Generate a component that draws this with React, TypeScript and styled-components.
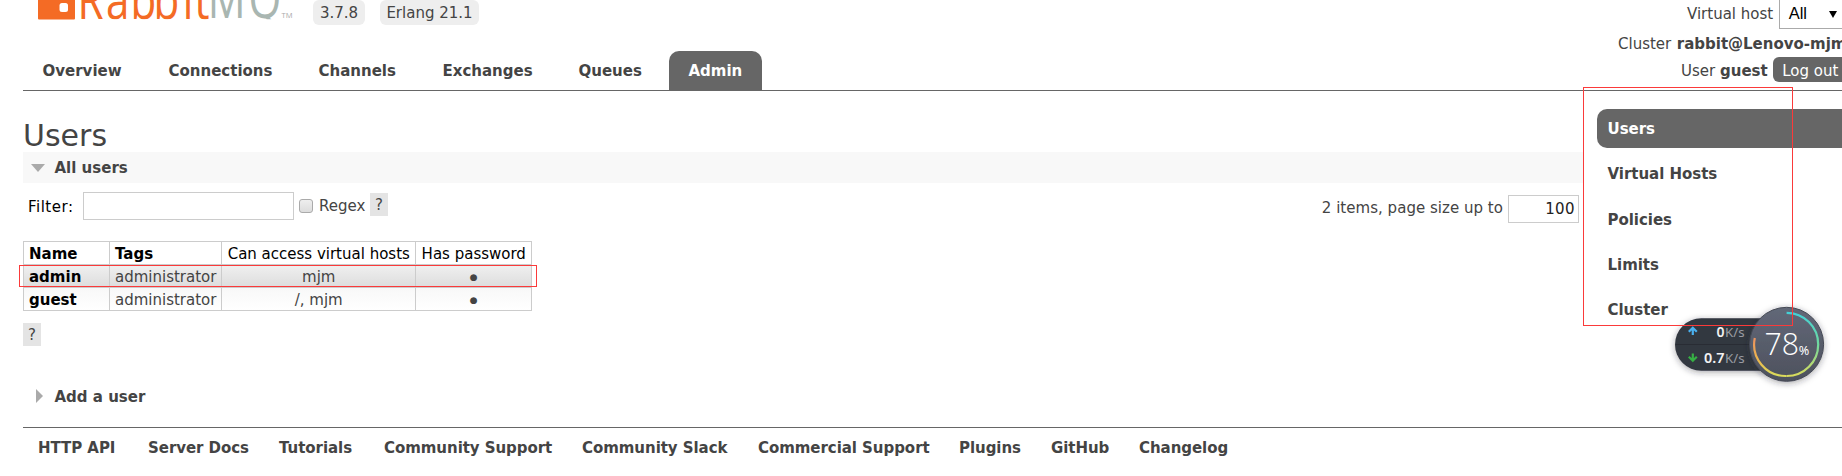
import React from "react";
import styled, { createGlobalStyle } from "styled-components";

const Global = createGlobalStyle`
  *, *::before, *::after { box-sizing: border-box; }
  body { margin: 0; background: #fff; color: #444; font: 15px/18px Verdana, "DejaVu Sans", sans-serif; }
  #root { overflow: hidden; }
`;

const Page = styled.div`
  position: relative;
  height: 476px;
  overflow: hidden;
  padding-left: 23px;
`;

const Header = styled.header`
  display: flex;
  justify-content: space-between;
  height: 91px;
  border-bottom: 1px solid #666;
`;

const HeaderLeft = styled.div`
  display: flex;
  flex-direction: column;
  justify-content: space-between;
`;

const Brand = styled.div`
  display: flex;
  height: 25px;
`;

const Logo = styled.svg`
  width: 290px;
  height: 25px;
`;

const Version = styled.span<{ $w: number }>`
  width: ${(p) => p.$w}px;
  height: 25px;
  margin-right: 15px;
  padding-top: 4px;
  text-align: center;
  white-space: nowrap;
  background: #eee;
  border-radius: 6px;
`;

const Tabs = styled.nav`
  display: flex;
`;

const Tab = styled.a<{ $w: number; $active?: boolean }>`
  width: ${(p) => p.$w}px;
  height: 39px;
  padding: 11px 0 0 19.5px;
  font-weight: bold;
  color: ${(p) => (p.$active ? "#fff" : "#444")};
  background: ${(p) => (p.$active ? "#666" : "transparent")};
  border-radius: 10px 10px 0 0;
`;

const Session = styled.div`
  width: 232px;
  display: flex;
  flex-direction: column;
  flex-shrink: 0;
`;

const SessionLine = styled.div<{ $pad: number; $h: number }>`
  display: flex;
  height: ${(p) => p.$h}px;
  padding-left: ${(p) => p.$pad}px;
  white-space: nowrap;
  gap: 5.5px;
`;

const SessionLabel = styled.span`
  padding-top: 5px;
`;

const VhostSelect = styled.div`
  display: flex;
  justify-content: space-between;
  flex-shrink: 0;
  width: 76px;
  height: 29px;
  padding: 4px 17px 0 9px;
  color: #000;
  font: 16.5px/18px "Liberation Sans", sans-serif;
  border: 1px solid #aaa;
  border-top: 0;
`;

const Arrow = styled.svg`
  width: 8px;
  height: 7px;
  margin-top: 7px;
`;

const Logout = styled.span`
  width: 80px;
  height: 25px;
  padding: 5px 9px;
  color: #fff;
  background: #666;
  border-radius: 6px;
`;

const Content = styled.div`
  display: flex;
  height: 336px;
`;

const Main = styled.main`
  width: 1560px;
  padding-top: 26px;
`;

const Title = styled.h1`
  height: 35px;
  margin: 0;
  font-size: 30px;
  line-height: 37px;
  font-weight: normal;
`;

const SectionBar = styled.h2<{ $open?: boolean }>`
  display: flex;
  align-items: center;
  height: 31px;
  margin: 0;
  padding-left: 8px;
  font-size: 15px;
  background: ${(p) => (p.$open ? "#f8f8f8" : "transparent")};
`;

const Toggle = styled.svg`
  width: 14px;
  height: 16px;
  margin-right: 9.5px;
`;

const FilterRow = styled.div`
  display: flex;
  align-items: flex-start;
  height: 58px;
  padding: 9px 4px 0 5px;
`;

const FilterLabel = styled.label`
  width: 55px;
  padding-top: 6px;
  letter-spacing: 0.5px;
  color: #000;
`;

const FilterInput = styled.input`
  width: 211px;
  height: 28px;
  border: 1px solid #ccc;
`;

const Checkbox = styled.span`
  width: 14px;
  height: 14px;
  margin: 7px 6px 0 5px;
  border: 1px solid #aaa;
  border-radius: 3px;
  background: linear-gradient(#eee, #dcdcdc);
`;

const RegexLabel = styled.label`
  width: 51px;
  padding-top: 5px;
`;

const Help = styled.span<{ $drop?: number }>`
  display: block;
  width: 18px;
  height: 23px;
  margin-top: ${(p) => p.$drop ?? 0}px;
  text-align: center;
  line-height: 24px;
  background: #e4e4e4;
`;

const PageSize = styled.div`
  display: flex;
  margin-left: auto;
  padding-top: 3px;
  gap: 5px;
  line-height: 26px;
  letter-spacing: 0.03px;
`;

const PageSizeInput = styled.input`
  width: 71px;
  height: 28px;
  padding: 0 3px;
  text-align: right;
  font: inherit;
  letter-spacing: 0.4px;
  color: #222;
  border: 1px solid #ccc;
`;

const UsersTable = styled.table`
  width: 508px;
  margin-bottom: 12px;
  table-layout: fixed;
  border-collapse: collapse;
`;

const Row = styled.tr<{ $bg: string }>`
  height: 23px;
  background: ${(p) => p.$bg};
`;

const Cell = styled.td<{ $bold?: boolean; $center?: boolean; $dark?: boolean }>`
  padding: 2px 4.5px 0 5px;
  border: 1px solid #ccc;
  white-space: nowrap;
  line-height: 20px;
  text-align: ${(p) => (p.$center ? "center" : "left")};
  font-weight: ${(p) => (p.$bold ? "bold" : "normal")};
  color: ${(p) => (p.$dark ? "#000" : "#444")};
`;

const Dot = styled.span`
  font-size: 9px;
  vertical-align: 2px;
  line-height: 1;
`;

const AddUser = styled.div`
  padding-top: 35px;
`;

const SideNav = styled.nav`
  display: flex;
  flex-direction: column;
  gap: 6.3px;
  flex: 1;
  padding: 18px 0 0 14px;
`;

const SideLink = styled.a<{ $active?: boolean }>`
  height: 39px;
  padding: 11px 10.5px;
  font-weight: bold;
  letter-spacing: -0.03px;
  color: ${(p) => (p.$active ? "#fff" : "#444")};
  background: ${(p) => (p.$active ? "#666" : "transparent")};
  border-radius: 10px 0 0 10px;
`;

const Footer = styled.footer`
  display: flex;
  padding: 11px 0 0 15px;
  border-top: 1px solid #666;
`;

const FooterLink = styled.a<{ $w: number }>`
  width: ${(p) => p.$w}px;
  font-weight: bold;
  letter-spacing: -0.05px;
  white-space: nowrap;
`;

const Highlight = styled.div<{ $x: number; $y: number; $w: number; $h: number }>`
  position: absolute;
  left: ${(p) => p.$x}px;
  top: ${(p) => p.$y}px;
  width: ${(p) => p.$w}px;
  height: ${(p) => p.$h}px;
  border: 1px solid #fb3a3a;
`;

const Monitor = styled.svg`
  position: absolute;
  left: 1660px;
  top: 295px;
  width: 182px;
  height: 95px;
`;

const tabs: [string, number][] = [["Overview", 126], ["Connections", 150], ["Channels", 124], ["Exchanges", 136], ["Queues", 110], ["Admin", 93]];
const sections = ["Users", "Virtual Hosts", "Policies", "Limits", "Cluster"];
const links: [string, number][] = [["HTTP API", 110], ["Server Docs", 131], ["Tutorials", 105], ["Community Support", 198], ["Community Slack", 176], ["Commercial Support", 201], ["Plugins", 92], ["GitHub", 88], ["Changelog", 100]];
const users = [
  { name: "admin", tags: "administrator", hosts: "mjm", bg: "linear-gradient(#f0f0f0, #dcdcdc)" },
  { name: "guest", tags: "administrator", hosts: "/, mjm", bg: "linear-gradient(#f8f8f8, #fff)" },
];

function SpeedMonitor() {
  return (
    <Monitor viewBox="0 0 182 95">
      <defs>
        <filter id="shadow" x="-20%" y="-20%" width="140%" height="150%">
          <feDropShadow dx="0" dy="1.5" stdDeviation="3" floodColor="#223" floodOpacity="0.4" />
        </filter>
        <linearGradient id="disc" x1="0" y1="0" x2="0" y2="1">
          <stop offset="0" stopColor="#626878" /><stop offset="1" stopColor="#4d515d" />
        </linearGradient>
        <linearGradient id="rightArc" x1="0" y1="17" x2="0" y2="81" gradientUnits="userSpaceOnUse">
          <stop offset="0" stopColor="#42d0d8" /><stop offset="0.5" stopColor="#6fd9a0" /><stop offset="1" stopColor="#d9dc5c" />
        </linearGradient>
        <linearGradient id="leftArc" x1="0" y1="42" x2="0" y2="81" gradientUnits="userSpaceOnUse">
          <stop offset="0" stopColor="#ee9060" /><stop offset="0.6" stopColor="#ebb84d" /><stop offset="1" stopColor="#d9dc5c" />
        </linearGradient>
      </defs>
      <rect x="15" y="23.3" width="112" height="52.4" rx="26.2" fill="#333741" filter="url(#shadow)" />
      <path d="M16 49.5H92" stroke="#292c34" />
      <circle cx="126.6" cy="49.3" r="37" fill="url(#disc)" stroke="#454955" filter="url(#shadow)" />
      <path d="M126.6 17.8A31.6 31.6 0 0 1 126.6 81" fill="none" stroke="url(#rightArc)" strokeWidth="2.2" />
      <path d="M126.6 81A31.6 31.6 0 0 1 94.8 43" fill="none" stroke="url(#leftArc)" strokeWidth="2.2" />
      <path d="M32.8 40V33M28.8 36.7L32.8 32.7L36.8 36.7" fill="none" stroke="#4ab1f0" strokeWidth="2.2" />
      <path d="M32.8 58.5V65.5M28.8 61.8L32.8 65.8L36.8 61.8" fill="none" stroke="#36b044" strokeWidth="2.2" />
      <g fontFamily="Noto Sans" fontSize="14" fontWeight="600" fill="#f2f2f2">
        <text x="56.5" y="42" textLength="8" lengthAdjust="spacingAndGlyphs">0</text>
        <text x="44" y="68.3" textLength="20.5" lengthAdjust="spacingAndGlyphs">0.7</text>
      </g>
      <g fontFamily="Noto Sans" fontSize="12" fill="#9a9ca3">
        <text x="65" y="42" textLength="19.5" lengthAdjust="spacingAndGlyphs">K/s</text>
        <text x="65" y="68.3" textLength="19.5" lengthAdjust="spacingAndGlyphs">K/s</text>
      </g>
      <text x="104.5" y="60" fontFamily="Open Sans" fontWeight="300" fontSize="32" fill="#fff" textLength="34.5" lengthAdjust="spacingAndGlyphs">78</text>
      <text x="138.8" y="60" fontFamily="Noto Sans" fontSize="13" fill="#fff" textLength="10.5" lengthAdjust="spacingAndGlyphs">%</text>
    </Monitor>
  );
}

export default function App() {
  return (
    <Page>
      <Global />
      <Header>
        <HeaderLeft>
          <Brand>
            <Logo viewBox="23 0 290 25">
              <defs><clipPath id="baseline"><rect x="23" y="0" width="400" height="19.3" /></clipPath></defs>
              <path d="M38 0H75V18.5Q75 19.5 74 19.5H39Q38 19.5 38 18.5Z" fill="#f46b25" />
              <rect x="59.5" y="3" width="8.5" height="9" rx="2.5" fill="#fff" />
              <g fontFamily="Open Sans" fontSize="54" transform="scale(0.78 1)" clipPath="url(#baseline)">
                <text x="99.5 136 167.2 196.7 234.3 249.5" y="18.7" fill="#f46b25">Rabbit</text>
                <text x="266.5 318.5" y="18.2" fill="#a9b6b1">MQ</text>
              </g>
              <text x="281.5" y="18" fill="#aaa" fontFamily="Open Sans" fontSize="8" textLength="11" lengthAdjust="spacingAndGlyphs">TM</text>
            </Logo>
            <Version $w={52}>3.7.8</Version>
            <Version $w={99}>Erlang 21.1</Version>
          </Brand>
          <Tabs>
            {tabs.map(([label, w]) => <Tab key={label} $w={w} $active={label === "Admin"}>{label}</Tab>)}
          </Tabs>
        </HeaderLeft>
        <Session>
          <SessionLine $pad={77} $h={35}>
            <SessionLabel>Virtual host</SessionLabel>
            <VhostSelect>All<Arrow viewBox="0 0 8 7"><path d="M0 0H8L4 7Z" /></Arrow></VhostSelect>
          </SessionLine>
          <SessionLine $pad={8} $h={22}>Cluster <b>rabbit@Lenovo-mjm</b></SessionLine>
          <SessionLine $pad={71} $h={25}>
            <SessionLabel>User <b>guest</b></SessionLabel>
            <Logout>Log out</Logout>
          </SessionLine>
        </Session>
      </Header>
      <Content>
        <Main>
          <Title>Users</Title>
          <SectionBar $open>
            <Toggle viewBox="0 0 14 16"><path d="M0 4H14L7 12Z" fill="#aaa" /></Toggle>
            All users
          </SectionBar>
          <FilterRow>
            <FilterLabel>Filter:</FilterLabel>
            <FilterInput />
            <Checkbox />
            <RegexLabel>Regex</RegexLabel>
            <Help $drop={1}>?</Help>
            <PageSize>2 items, page size up to<PageSizeInput defaultValue="100" /></PageSize>
          </FilterRow>
          <UsersTable>
            <colgroup><col width="86" /><col width="112" /><col width="194" /><col width="116" /></colgroup>
            <tbody>
              <Row $bg="#fff">
                <Cell $bold $dark>Name</Cell><Cell $bold $dark>Tags</Cell><Cell $dark $center>Can access virtual hosts</Cell><Cell $dark $center>Has password</Cell>
              </Row>
              {users.map((u) => (
                <Row key={u.name} $bg={u.bg}>
                  <Cell $bold $dark>{u.name}</Cell><Cell>{u.tags}</Cell><Cell $center>{u.hosts}</Cell><Cell $center><Dot>●</Dot></Cell>
                </Row>
              ))}
            </tbody>
          </UsersTable>
          <Help>?</Help>
          <AddUser>
            <SectionBar>
              <Toggle viewBox="0 0 14 16"><path d="M5 0V14L12 7Z" fill="#aaa" /></Toggle>
              Add a user
            </SectionBar>
          </AddUser>
        </Main>
        <SideNav>
          {sections.map((s) => <SideLink key={s} $active={s === "Users"}>{s}</SideLink>)}
        </SideNav>
      </Content>
      <Footer>
        {links.map(([label, w]) => <FooterLink key={label} $w={w}>{label}</FooterLink>)}
      </Footer>
      <SpeedMonitor />
      <Highlight $x={1583} $y={87} $w={210} $h={239} />
      <Highlight $x={19} $y={265} $w={518} $h={22} />
    </Page>
  );
}
